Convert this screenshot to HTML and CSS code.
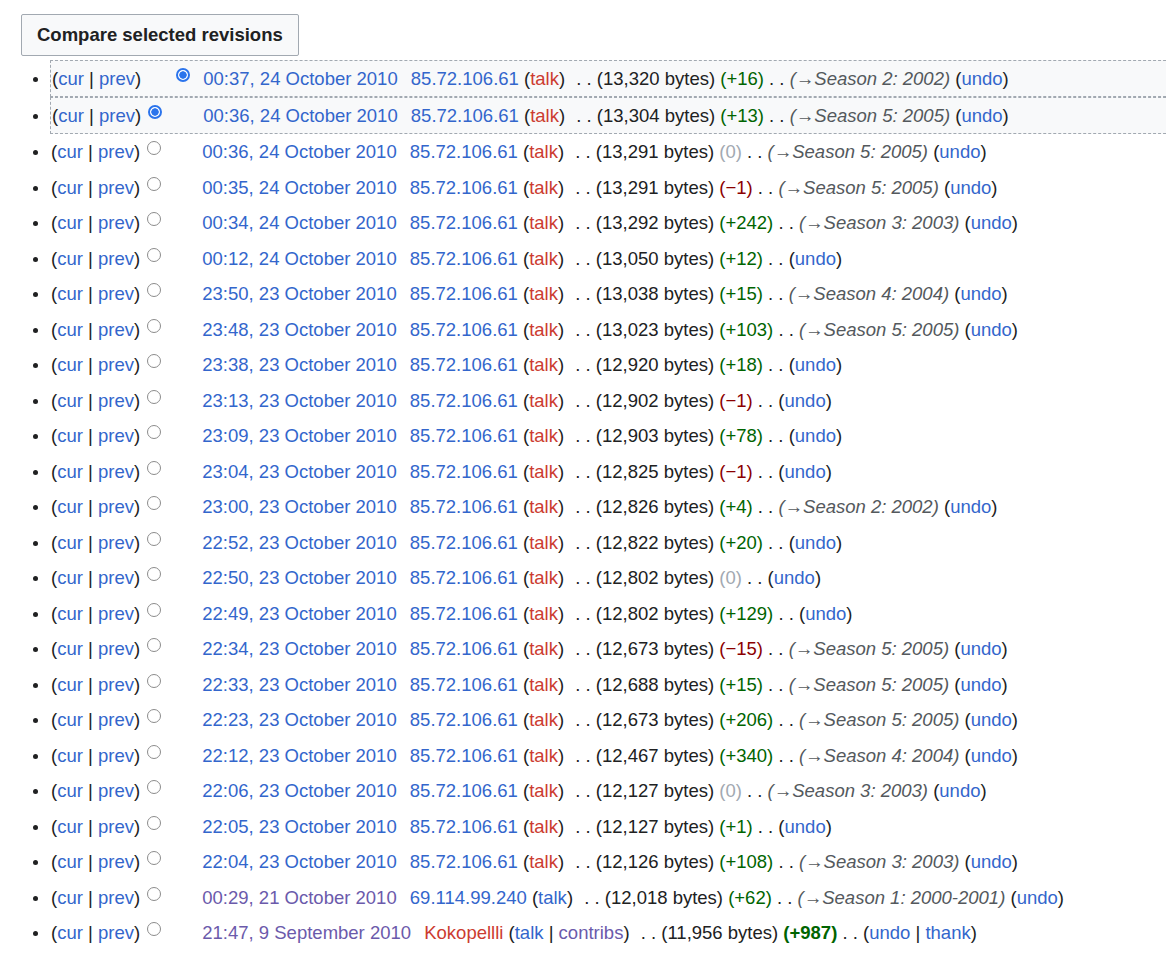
FILE: index.html
```html
<!DOCTYPE html>
<html lang="en">
<head>
  <meta charset="UTF-8" />
  <title>Revision history</title>
  <link rel="stylesheet" href="styles.css">
</head>
<body>

<form class="history">
  <button type="button" class="compare-btn">Compare selected revisions</button>

  <ul class="pagehistory">
    <li class="selected">
      <span class="links">(<a href="#">cur</a> | <a href="#">prev</a>)</span><input type="radio" class="radio hide"><input type="radio" class="radio" checked>
      <a href="#" class="date">00:37, 24 October 2010</a>
      <span class="user"><a href="#">85.72.106.61</a> (<a href="#" class="new">talk</a>)</span>
      <span class="sep">. .</span> <span class="size">(13,320 bytes)</span> <span class="pos">(+16)</span>
      <span class="sep">. .</span> <span class="comment">(→Season 2: 2002)</span> (<a href="#">undo</a>)
    </li>
    <li class="selected">
      <span class="links">(<a href="#">cur</a> | <a href="#">prev</a>)</span><input type="radio" class="radio" checked><input type="radio" class="radio hide">
      <a href="#" class="date">00:36, 24 October 2010</a>
      <span class="user"><a href="#">85.72.106.61</a> (<a href="#" class="new">talk</a>)</span>
      <span class="sep">. .</span> <span class="size">(13,304 bytes)</span> <span class="pos">(+13)</span>
      <span class="sep">. .</span> <span class="comment">(→Season 5: 2005)</span> (<a href="#">undo</a>)
    </li>
    <li>
      <span class="links">(<a href="#">cur</a> | <a href="#">prev</a>)</span><input type="radio" class="radio"><input type="radio" class="radio hide">
      <a href="#" class="date">00:36, 24 October 2010</a>
      <span class="user"><a href="#">85.72.106.61</a> (<a href="#" class="new">talk</a>)</span>
      <span class="sep">. .</span> <span class="size">(13,291 bytes)</span> <span class="null">(0)</span>
      <span class="sep">. .</span> <span class="comment">(→Season 5: 2005)</span> (<a href="#">undo</a>)
    </li>
    <li>
      <span class="links">(<a href="#">cur</a> | <a href="#">prev</a>)</span><input type="radio" class="radio"><input type="radio" class="radio hide">
      <a href="#" class="date">00:35, 24 October 2010</a>
      <span class="user"><a href="#">85.72.106.61</a> (<a href="#" class="new">talk</a>)</span>
      <span class="sep">. .</span> <span class="size">(13,291 bytes)</span> <span class="neg">(−1)</span>
      <span class="sep">. .</span> <span class="comment">(→Season 5: 2005)</span> (<a href="#">undo</a>)
    </li>
    <li>
      <span class="links">(<a href="#">cur</a> | <a href="#">prev</a>)</span><input type="radio" class="radio"><input type="radio" class="radio hide">
      <a href="#" class="date">00:34, 24 October 2010</a>
      <span class="user"><a href="#">85.72.106.61</a> (<a href="#" class="new">talk</a>)</span>
      <span class="sep">. .</span> <span class="size">(13,292 bytes)</span> <span class="pos">(+242)</span>
      <span class="sep">. .</span> <span class="comment">(→Season 3: 2003)</span> (<a href="#">undo</a>)
    </li>
    <li>
      <span class="links">(<a href="#">cur</a> | <a href="#">prev</a>)</span><input type="radio" class="radio"><input type="radio" class="radio hide">
      <a href="#" class="date">00:12, 24 October 2010</a>
      <span class="user"><a href="#">85.72.106.61</a> (<a href="#" class="new">talk</a>)</span>
      <span class="sep">. .</span> <span class="size">(13,050 bytes)</span> <span class="pos">(+12)</span>
      <span class="sep">. .</span> (<a href="#">undo</a>)
    </li>
    <li>
      <span class="links">(<a href="#">cur</a> | <a href="#">prev</a>)</span><input type="radio" class="radio"><input type="radio" class="radio hide">
      <a href="#" class="date">23:50, 23 October 2010</a>
      <span class="user"><a href="#">85.72.106.61</a> (<a href="#" class="new">talk</a>)</span>
      <span class="sep">. .</span> <span class="size">(13,038 bytes)</span> <span class="pos">(+15)</span>
      <span class="sep">. .</span> <span class="comment">(→Season 4: 2004)</span> (<a href="#">undo</a>)
    </li>
    <li>
      <span class="links">(<a href="#">cur</a> | <a href="#">prev</a>)</span><input type="radio" class="radio"><input type="radio" class="radio hide">
      <a href="#" class="date">23:48, 23 October 2010</a>
      <span class="user"><a href="#">85.72.106.61</a> (<a href="#" class="new">talk</a>)</span>
      <span class="sep">. .</span> <span class="size">(13,023 bytes)</span> <span class="pos">(+103)</span>
      <span class="sep">. .</span> <span class="comment">(→Season 5: 2005)</span> (<a href="#">undo</a>)
    </li>
    <li>
      <span class="links">(<a href="#">cur</a> | <a href="#">prev</a>)</span><input type="radio" class="radio"><input type="radio" class="radio hide">
      <a href="#" class="date">23:38, 23 October 2010</a>
      <span class="user"><a href="#">85.72.106.61</a> (<a href="#" class="new">talk</a>)</span>
      <span class="sep">. .</span> <span class="size">(12,920 bytes)</span> <span class="pos">(+18)</span>
      <span class="sep">. .</span> (<a href="#">undo</a>)
    </li>
    <li>
      <span class="links">(<a href="#">cur</a> | <a href="#">prev</a>)</span><input type="radio" class="radio"><input type="radio" class="radio hide">
      <a href="#" class="date">23:13, 23 October 2010</a>
      <span class="user"><a href="#">85.72.106.61</a> (<a href="#" class="new">talk</a>)</span>
      <span class="sep">. .</span> <span class="size">(12,902 bytes)</span> <span class="neg">(−1)</span>
      <span class="sep">. .</span> (<a href="#">undo</a>)
    </li>
    <li>
      <span class="links">(<a href="#">cur</a> | <a href="#">prev</a>)</span><input type="radio" class="radio"><input type="radio" class="radio hide">
      <a href="#" class="date">23:09, 23 October 2010</a>
      <span class="user"><a href="#">85.72.106.61</a> (<a href="#" class="new">talk</a>)</span>
      <span class="sep">. .</span> <span class="size">(12,903 bytes)</span> <span class="pos">(+78)</span>
      <span class="sep">. .</span> (<a href="#">undo</a>)
    </li>
    <li>
      <span class="links">(<a href="#">cur</a> | <a href="#">prev</a>)</span><input type="radio" class="radio"><input type="radio" class="radio hide">
      <a href="#" class="date">23:04, 23 October 2010</a>
      <span class="user"><a href="#">85.72.106.61</a> (<a href="#" class="new">talk</a>)</span>
      <span class="sep">. .</span> <span class="size">(12,825 bytes)</span> <span class="neg">(−1)</span>
      <span class="sep">. .</span> (<a href="#">undo</a>)
    </li>
    <li>
      <span class="links">(<a href="#">cur</a> | <a href="#">prev</a>)</span><input type="radio" class="radio"><input type="radio" class="radio hide">
      <a href="#" class="date">23:00, 23 October 2010</a>
      <span class="user"><a href="#">85.72.106.61</a> (<a href="#" class="new">talk</a>)</span>
      <span class="sep">. .</span> <span class="size">(12,826 bytes)</span> <span class="pos">(+4)</span>
      <span class="sep">. .</span> <span class="comment">(→Season 2: 2002)</span> (<a href="#">undo</a>)
    </li>
    <li>
      <span class="links">(<a href="#">cur</a> | <a href="#">prev</a>)</span><input type="radio" class="radio"><input type="radio" class="radio hide">
      <a href="#" class="date">22:52, 23 October 2010</a>
      <span class="user"><a href="#">85.72.106.61</a> (<a href="#" class="new">talk</a>)</span>
      <span class="sep">. .</span> <span class="size">(12,822 bytes)</span> <span class="pos">(+20)</span>
      <span class="sep">. .</span> (<a href="#">undo</a>)
    </li>
    <li>
      <span class="links">(<a href="#">cur</a> | <a href="#">prev</a>)</span><input type="radio" class="radio"><input type="radio" class="radio hide">
      <a href="#" class="date">22:50, 23 October 2010</a>
      <span class="user"><a href="#">85.72.106.61</a> (<a href="#" class="new">talk</a>)</span>
      <span class="sep">. .</span> <span class="size">(12,802 bytes)</span> <span class="null">(0)</span>
      <span class="sep">. .</span> (<a href="#">undo</a>)
    </li>
    <li>
      <span class="links">(<a href="#">cur</a> | <a href="#">prev</a>)</span><input type="radio" class="radio"><input type="radio" class="radio hide">
      <a href="#" class="date">22:49, 23 October 2010</a>
      <span class="user"><a href="#">85.72.106.61</a> (<a href="#" class="new">talk</a>)</span>
      <span class="sep">. .</span> <span class="size">(12,802 bytes)</span> <span class="pos">(+129)</span>
      <span class="sep">. .</span> (<a href="#">undo</a>)
    </li>
    <li>
      <span class="links">(<a href="#">cur</a> | <a href="#">prev</a>)</span><input type="radio" class="radio"><input type="radio" class="radio hide">
      <a href="#" class="date">22:34, 23 October 2010</a>
      <span class="user"><a href="#">85.72.106.61</a> (<a href="#" class="new">talk</a>)</span>
      <span class="sep">. .</span> <span class="size">(12,673 bytes)</span> <span class="neg">(−15)</span>
      <span class="sep">. .</span> <span class="comment">(→Season 5: 2005)</span> (<a href="#">undo</a>)
    </li>
    <li>
      <span class="links">(<a href="#">cur</a> | <a href="#">prev</a>)</span><input type="radio" class="radio"><input type="radio" class="radio hide">
      <a href="#" class="date">22:33, 23 October 2010</a>
      <span class="user"><a href="#">85.72.106.61</a> (<a href="#" class="new">talk</a>)</span>
      <span class="sep">. .</span> <span class="size">(12,688 bytes)</span> <span class="pos">(+15)</span>
      <span class="sep">. .</span> <span class="comment">(→Season 5: 2005)</span> (<a href="#">undo</a>)
    </li>
    <li>
      <span class="links">(<a href="#">cur</a> | <a href="#">prev</a>)</span><input type="radio" class="radio"><input type="radio" class="radio hide">
      <a href="#" class="date">22:23, 23 October 2010</a>
      <span class="user"><a href="#">85.72.106.61</a> (<a href="#" class="new">talk</a>)</span>
      <span class="sep">. .</span> <span class="size">(12,673 bytes)</span> <span class="pos">(+206)</span>
      <span class="sep">. .</span> <span class="comment">(→Season 5: 2005)</span> (<a href="#">undo</a>)
    </li>
    <li>
      <span class="links">(<a href="#">cur</a> | <a href="#">prev</a>)</span><input type="radio" class="radio"><input type="radio" class="radio hide">
      <a href="#" class="date">22:12, 23 October 2010</a>
      <span class="user"><a href="#">85.72.106.61</a> (<a href="#" class="new">talk</a>)</span>
      <span class="sep">. .</span> <span class="size">(12,467 bytes)</span> <span class="pos">(+340)</span>
      <span class="sep">. .</span> <span class="comment">(→Season 4: 2004)</span> (<a href="#">undo</a>)
    </li>
    <li>
      <span class="links">(<a href="#">cur</a> | <a href="#">prev</a>)</span><input type="radio" class="radio"><input type="radio" class="radio hide">
      <a href="#" class="date">22:06, 23 October 2010</a>
      <span class="user"><a href="#">85.72.106.61</a> (<a href="#" class="new">talk</a>)</span>
      <span class="sep">. .</span> <span class="size">(12,127 bytes)</span> <span class="null">(0)</span>
      <span class="sep">. .</span> <span class="comment">(→Season 3: 2003)</span> (<a href="#">undo</a>)
    </li>
    <li>
      <span class="links">(<a href="#">cur</a> | <a href="#">prev</a>)</span><input type="radio" class="radio"><input type="radio" class="radio hide">
      <a href="#" class="date">22:05, 23 October 2010</a>
      <span class="user"><a href="#">85.72.106.61</a> (<a href="#" class="new">talk</a>)</span>
      <span class="sep">. .</span> <span class="size">(12,127 bytes)</span> <span class="pos">(+1)</span>
      <span class="sep">. .</span> (<a href="#">undo</a>)
    </li>
    <li>
      <span class="links">(<a href="#">cur</a> | <a href="#">prev</a>)</span><input type="radio" class="radio"><input type="radio" class="radio hide">
      <a href="#" class="date">22:04, 23 October 2010</a>
      <span class="user"><a href="#">85.72.106.61</a> (<a href="#" class="new">talk</a>)</span>
      <span class="sep">. .</span> <span class="size">(12,126 bytes)</span> <span class="pos">(+108)</span>
      <span class="sep">. .</span> <span class="comment">(→Season 3: 2003)</span> (<a href="#">undo</a>)
    </li>
    <li>
      <span class="links">(<a href="#">cur</a> | <a href="#">prev</a>)</span><input type="radio" class="radio"><input type="radio" class="radio hide">
      <a href="#" class="date visited">00:29, 21 October 2010</a>
      <span class="user"><a href="#">69.114.99.240</a> (<a href="#">talk</a>)</span>
      <span class="sep">. .</span> <span class="size">(12,018 bytes)</span> <span class="pos">(+62)</span>
      <span class="sep">. .</span> <span class="comment">(→Season 1: 2000-2001)</span> (<a href="#">undo</a>)
    </li>
    <li>
      <span class="links">(<a href="#">cur</a> | <a href="#">prev</a>)</span><input type="radio" class="radio"><input type="radio" class="radio hide">
      <a href="#" class="date visited">21:47, 9 September 2010</a>
      <span class="user"><a href="#" class="new">Kokopellli</a> (<a href="#">talk</a> | <a href="#" class="visited">contribs</a>)</span>
      <span class="sep">. .</span> <span class="size">(11,956 bytes)</span> <span class="pos big">(+987)</span>
      <span class="sep">. .</span> (<a href="#">undo</a> | <a href="#">thank</a>)
    </li>
  </ul>
</form>

</body>
</html>
```

FILE: styles.css
```css
html { overflow-x: hidden; }
body {
  font-family: "Liberation Sans", Arial, Helvetica, sans-serif;
  font-size: 18.5px;
  color: #202122;
  background: #fff;
  margin: 0;
}
a { color: #3366cc; text-decoration: none; }
a.new { color: #cc3b30; }
a.visited { color: #6b5aab; }

.history { padding: 14px 0 0 21px; }

.compare-btn {
  font-family: inherit;
  font-size: 18.5px;
  font-weight: bold;
  color: #202122;
  background: #f8f9fa;
  border: 1px solid #a2a9b1;
  border-radius: 2px;
  height: 42px;
  padding: 0 15px;
  cursor: pointer;
}

.pagehistory {
  list-style: disc;
  margin: 4px -30px 0 0;
  padding: 0 0 0 29px;
}
.pagehistory li {
  line-height: 29px;
  padding: 3px 0 3.5px 1px;
  white-space: nowrap;
}
.pagehistory li.selected {
  border: 1px dashed #a2a9b1;
  background: #f8f9fa;
  padding: 3px 0 3px 1px;
}
.pagehistory li::marker { font-size: 17px; }

.radio {
  -webkit-appearance: none;
  appearance: none;
  width: 14px;
  height: 14px;
  margin: 0 7px;
  border: 1px solid #8c8c8c;
  border-radius: 50%;
  background: #fff;
  vertical-align: 3px;
}
.radio:checked {
  border: 2px solid #2b74ec;
  background: radial-gradient(circle, #2b74ec 0 3.4px, #fff 4px);
}
.radio.hide { visibility: hidden; }

.date { margin-left: 1px; margin-right: 8px; }
.user { margin-right: 6px; }
.size { color: #202122; }
.pos { color: #006400; }
.pos.big { font-weight: bold; }
.neg { color: #8b0000; }
.null { color: #a2a9b1; }
.comment { color: #54595d; font-style: italic; }
```
